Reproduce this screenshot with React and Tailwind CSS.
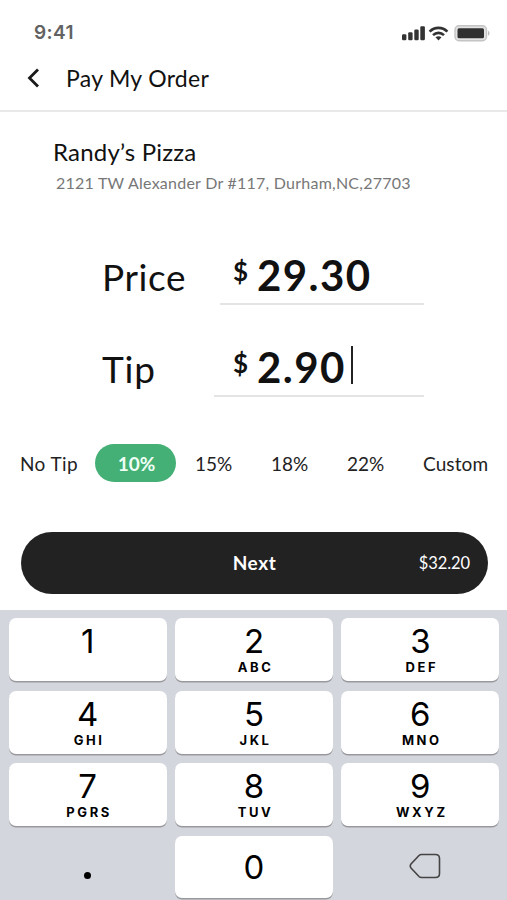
const TIPS = [
  { label: 'No Tip', className: 'w-[75px] pl-5 text-left tracking-[0.4px]' },
  { label: '10%', active: true, className: 'ml-5 w-[81px] pl-0.5 text-center' },
  { label: '15%', className: 'ml-[19px] w-9' },
  { label: '18%', className: 'ml-[40px] w-9' },
  { label: '22%', className: 'ml-[40px] w-9' },
  { label: 'Custom', className: 'ml-[40px] tracking-[0.1px]' },
]

const KEYS = [
  { digit: '1' },
  { digit: '2', letters: 'ABC' },
  { digit: '3', letters: 'DEF' },
  { digit: '4', letters: 'GHI' },
  { digit: '5', letters: 'JKL' },
  { digit: '6', letters: 'MNO' },
  { digit: '7', letters: 'PGRS' },
  { digit: '8', letters: 'TUV' },
  { digit: '9', letters: 'WXYZ' },
]

function StatusBar() {
  return (
    <div className="flex h-[62px] shrink-0 items-center justify-between pt-[4px] pr-[17px] pl-[34px] font-['Inter',sans-serif]">
      <span className="text-[19px] font-semibold tracking-[0.4px] text-[#626262]">9:41</span>
      <svg viewBox="0 0 89 20" className="h-5 w-[89px]" aria-hidden="true">
        <g fill="#333">
          <rect x="1" y="11.3" width="4.4" height="6" rx="1.2" />
          <rect x="7.2" y="9.3" width="4.4" height="8" rx="1.2" />
          <rect x="13.3" y="6.5" width="4.4" height="10.8" rx="1.2" />
          <rect x="19.3" y="3.3" width="4.6" height="14" rx="1.2" />
        </g>
        <g fill="none" stroke="#333" strokeWidth="2.6">
          <path d="M28.6 8.6c5-5 12.8-5 17.8 0" />
          <path d="M32 12.1c3.2-3 7.8-3 11 0" />
        </g>
        <path d="M34.5 14.3c1.8-1.5 4.2-1.5 6 0l-3 3.2z" fill="#333" />
        <rect x="54" y="2.8" width="31.5" height="15" rx="4" fill="#e2e2e2" stroke="#c4c4c4" strokeWidth="1.4" />
        <rect x="56.5" y="5.3" width="26.5" height="10" rx="1.5" fill="#303030" />
        <path d="M87 7.8c2 .7 2 4.3 0 5z" fill="#bdbdbd" />
      </svg>
    </div>
  )
}

function Amount({ value, focused }) {
  return (
    <div className="flex items-start">
      <span className="mt-[2px] w-6 text-[26px] leading-[26px] font-bold">$</span>
      <span className="-mt-1.5 text-[42px] leading-[50px] font-bold tracking-[1.4px]">{value}</span>
      {focused && <span className="-mt-0.5 ml-[5px] h-[38px] w-0.5 bg-[#222]" />}
    </div>
  )
}

function Key({ digit, letters }) {
  return (
    <button
      type="button"
      className="flex h-[63px] flex-col items-center rounded-[7px] bg-white pt-1 shadow-[0_1.5px_0_#98999d]"
    >
      <span className="text-[33px] leading-[38px]">{digit}</span>
      {letters && (
        <span className="pl-[3px] text-[13px] leading-[14px] font-bold tracking-[2.6px]">{letters}</span>
      )}
    </button>
  )
}

export default function App() {
  return (
    <div className="flex h-[900px] w-[507px] flex-col overflow-hidden bg-white font-['Lato',sans-serif] text-[#111]">
      <StatusBar />

      <header className="flex h-[50px] shrink-0 items-start border-b-2 border-[#e9e9e9] pl-[27px]">
        <svg viewBox="0 0 14 20" className="mt-[6px] h-5 w-3.5" aria-hidden="true">
          <path d="M11 1.5L2.5 10l8.5 8.5" fill="none" stroke="#1a1a1a" strokeWidth="2.8" />
        </svg>
        <h1 className="ml-[25px] text-[23px] leading-8 tracking-[0.3px]">Pay My Order</h1>
      </header>

      <main className="flex h-[498px] shrink-0 flex-col">
        <div className="pt-[25px] pl-[53px]">
          <h2 className="text-[24px] leading-[30px] tracking-[0.2px]">Randy’s Pizza</h2>
          <p className="mt-[6px] ml-[3px] text-[16px] leading-5 tracking-[0.24px] text-[#777]">
            2121 TW Alexander Dr #117, Durham,NC,27703
          </p>
        </div>

        <div className="mt-[63px] flex h-[49px]">
          <span className="-mt-px w-[220px] pl-[102px] text-[37px] leading-[44px] tracking-[0.6px]">Price</span>
          <div className="h-[49px] w-[204px] border-b-2 border-[#e4e4e4] pl-[13px]">
            <Amount value="29.30" />
          </div>
        </div>

        <div className="mt-[43px] flex h-[49px]">
          <span className="-mt-px w-[214px] pl-[102px] text-[37px] leading-[44px] tracking-[0.8px]">Tip</span>
          <div className="h-[49px] w-[210px] border-b-2 border-[#e4e4e4] pl-[19px]">
            <Amount value="2.90" focused />
          </div>
        </div>

        <div className="mt-[47px] flex h-[38px] text-[19px] leading-[39px] whitespace-nowrap text-[#222]">
          {TIPS.map((tip) => (
            <button
              key={tip.label}
              type="button"
              className={`${tip.className} ${tip.active ? 'rounded-full bg-[#45b075] font-bold text-[#effff5]' : ''}`}
            >
              {tip.label}
            </button>
          ))}
        </div>

        <button
          type="button"
          className="mt-[50px] ml-[21px] grid h-[62px] w-[467px] shrink-0 grid-cols-[1fr_auto_1fr] items-center rounded-full bg-[#222] px-[18px] pt-px text-white"
        >
          <span className="col-start-2 text-[19px] font-bold tracking-[0.6px]">Next</span>
          <span className="text-right text-[16.5px] tracking-[-0.1px]">$32.20</span>
        </button>
      </main>

      <div className="grid flex-1 grid-cols-3 content-start gap-x-2 gap-y-[9.5px] bg-[#d4d6dd] pt-2 pr-[7.5px] pl-[8.5px] font-['Inter',sans-serif] text-black">
        {KEYS.map((key) => (
          <Key key={key.digit} {...key} />
        ))}
        <button type="button" className="flex items-center justify-center pt-[18px]" aria-label="Decimal point">
          <span className="size-[7px] rounded-full bg-black" />
        </button>
        <button
          type="button"
          className="flex h-[62px] items-center justify-center rounded-[7px] bg-white pt-0.5 text-[33px] shadow-[0_1.5px_0_#98999d]"
        >
          0
        </button>
        <button type="button" className="flex items-center justify-center" aria-label="Delete">
          <svg viewBox="0 0 32 26" className="-mt-0.5 ml-[9px] h-[26px] w-8" aria-hidden="true">
            <path
              d="M12.5 1.5h14q4 0 4 4v15q0 4-4 4h-14q-1.5 0-2.5-1l-8-8.500q-1.5-2 0-4l8-8.500q1-1 2.500-1z"
              fill="none"
              stroke="#444"
              strokeWidth="1.6"
            />
          </svg>
        </button>
      </div>
    </div>
  )
}
